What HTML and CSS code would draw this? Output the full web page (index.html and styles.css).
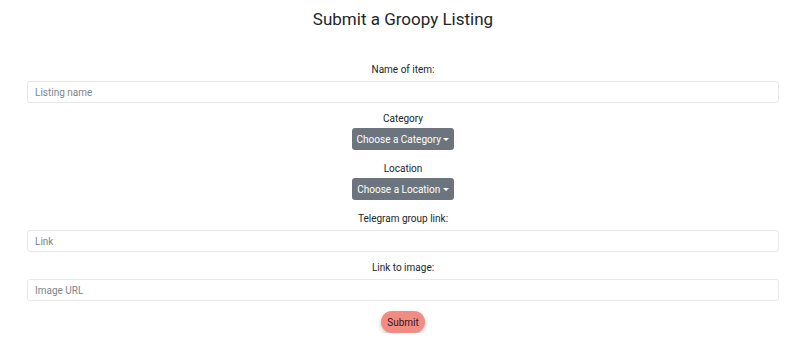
FILE: index.html
```html
<!DOCTYPE html>
<html lang="en">

<head>
    <meta charset="UTF-8">
    <meta name="viewport" content="width=device-width, initial-scale=1.0">
    <title>Submit a Groopy Listing</title>
    <link rel="stylesheet" href="styles.css">
</head>

<body>
    <main class="container">
        <h1 class="page-title">Submit a Groopy Listing</h1>

        <form class="listing-form">
            <label class="field-label" for="name">Name of item:</label>
            <input class="text-input" id="name" type="text" placeholder="Listing name">

            <span class="field-label field-label--tight">Category</span>
            <button type="button" class="dropdown-btn">Choose a Category <span class="caret"></span></button>

            <span class="field-label field-label--tight">Location</span>
            <button type="button" class="dropdown-btn">Choose a Location <span class="caret"></span></button>

            <label class="field-label" for="link">Telegram group link:</label>
            <input class="text-input" id="link" type="text" placeholder="Link">

            <label class="field-label" for="image">Link to image:</label>
            <input class="text-input" id="image" type="text" placeholder="Image URL">

            <button type="submit" class="submit-btn">Submit</button>
        </form>
    </main>
</body>

</html>
```

FILE: styles.css
```css
* {
    box-sizing: border-box;
    margin: 0;
    padding: 0;
}

body {
    font-family: Roboto, 'Liberation Sans', sans-serif;
    color: #212529;
    background-color: #fff;
}

.container {
    padding: 0 27px;
}

.page-title {
    text-align: center;
    font-size: 17px;
    font-weight: 400;
    line-height: 20px;
    padding-top: 9px;
    margin-bottom: 35px;
}

.listing-form {
    display: flex;
    flex-direction: column;
    align-items: center;
}

.field-label {
    font-size: 10px;
    line-height: 12px;
    margin-bottom: 5px;
}

.field-label--tight {
    margin-bottom: 3px;
}

.text-input {
    width: 100%;
    height: 22px;
    padding: 0 7px;
    font-family: inherit;
    font-size: 10px;
    color: #495057;
    border: 1px solid #e6e8ea;
    border-radius: 3px;
    margin-bottom: 10px;
}

.text-input::placeholder {
    color: #7d848b;
}

.dropdown-btn {
    height: 22px;
    padding: 0 5px;
    font-family: inherit;
    font-size: 10px;
    color: #fff;
    background-color: #6c757d;
    border: none;
    border-radius: 3px;
    margin-bottom: 13px;
}

.caret {
    display: inline-block;
    width: 0;
    height: 0;
    border-left: 3px solid transparent;
    border-right: 3px solid transparent;
    border-top: 3px solid #fff;
    vertical-align: 2px;
}

.submit-btn {
    height: 22px;
    padding: 0 6px;
    font-family: inherit;
    font-size: 10px;
    color: #3b1414;
    background-color: #f28b82;
    border: none;
    border-radius: 11px;
    box-shadow: 0 2px 4px rgba(0, 0, 0, 0.25);
}
```
